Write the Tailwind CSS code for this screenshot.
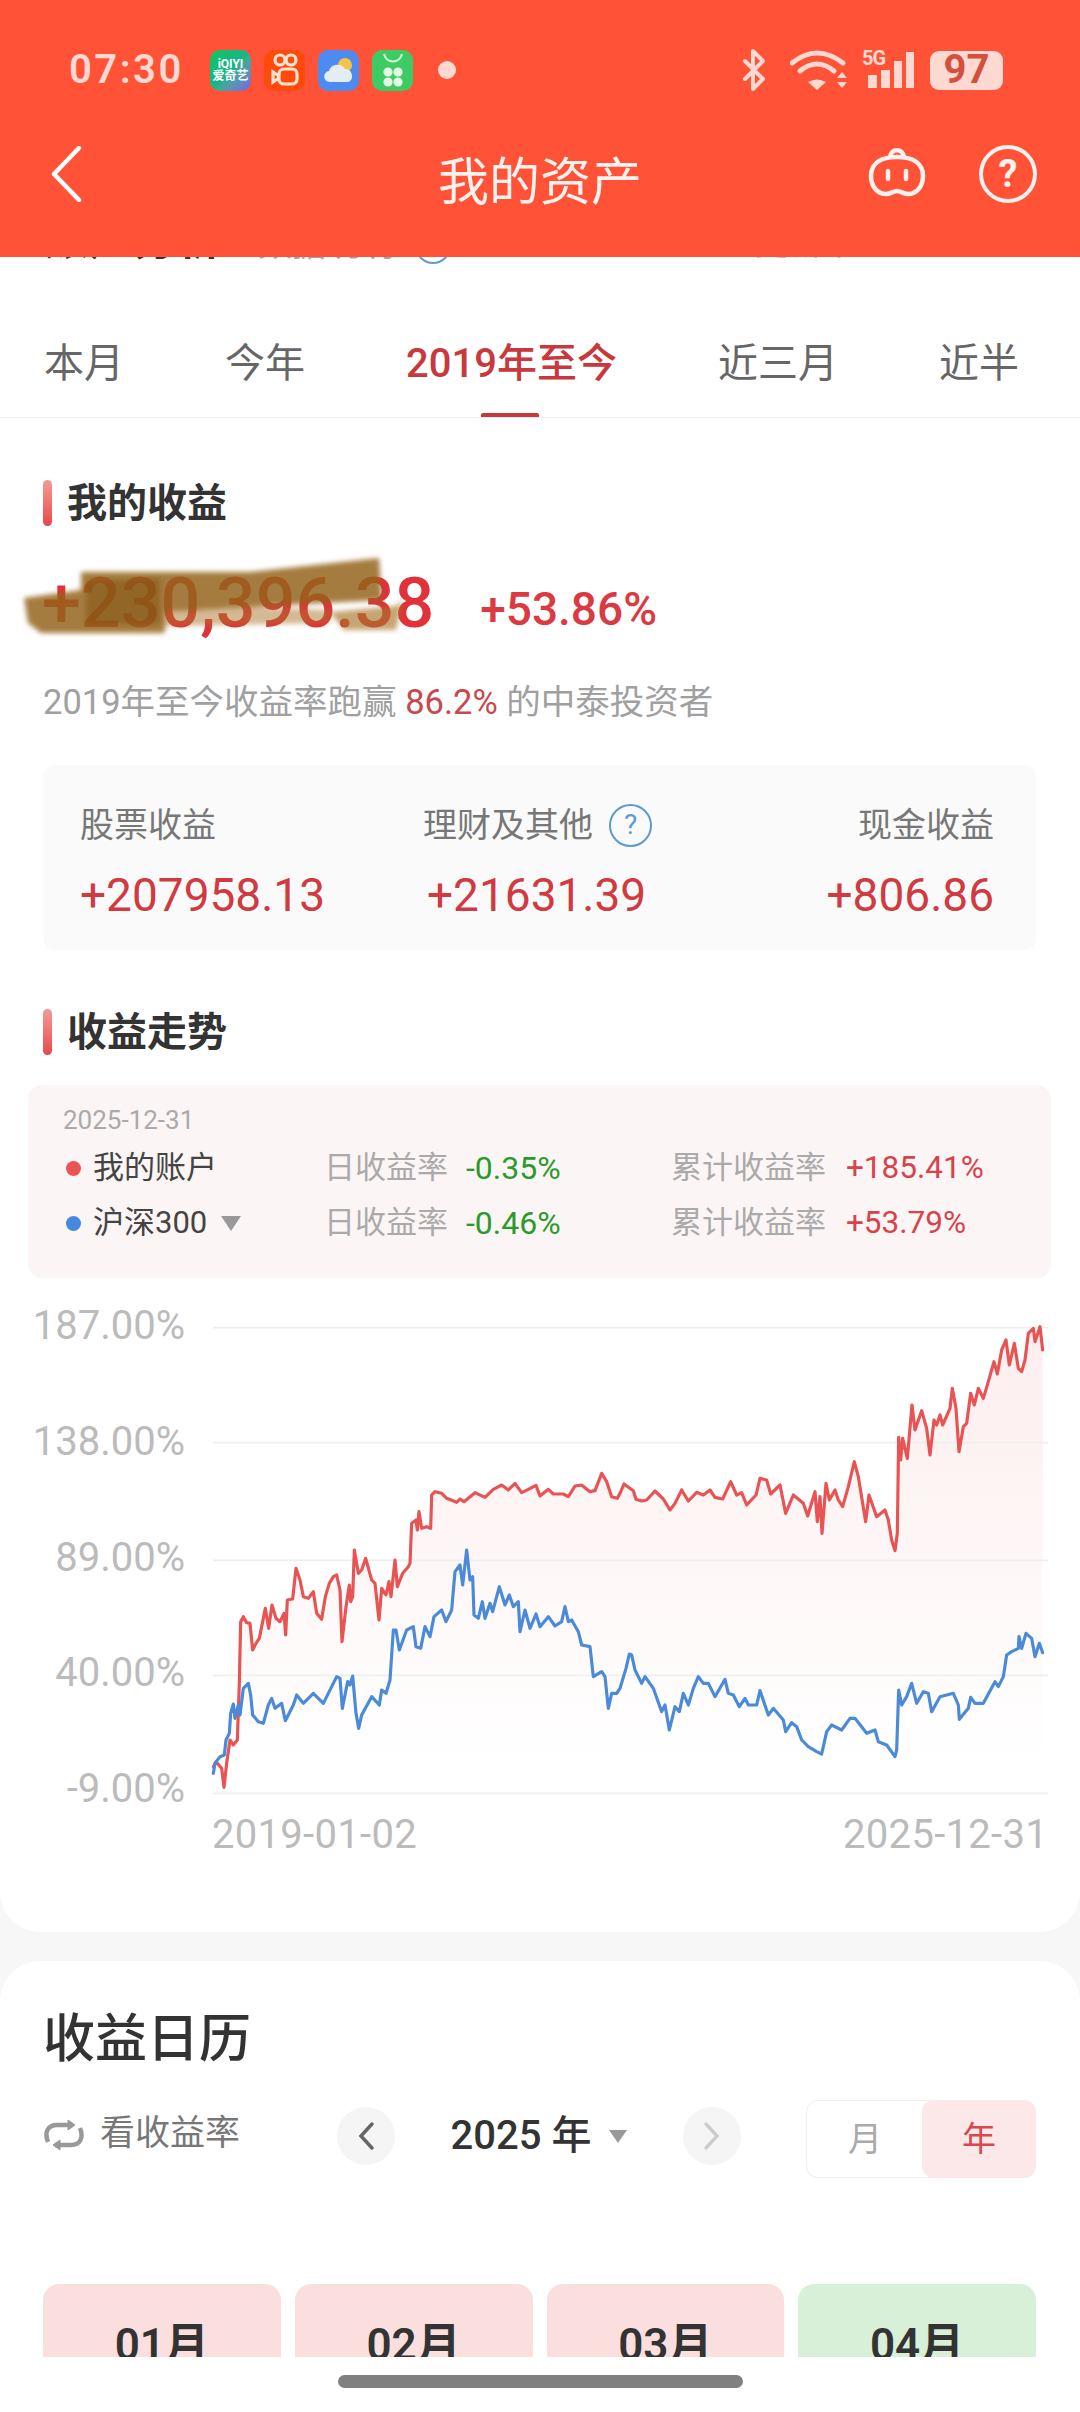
<!DOCTYPE html>
<html lang="zh">

<head>
    <meta charset="UTF-8">
    <meta name="viewport" content="width=device-width, initial-scale=1.0">
    <script src="https://cdn.jsdelivr.net/npm/@tailwindcss/browser@4"></script>
    <title>我的资产</title>
</head>

<body class="relative flex flex-col w-[1080px] h-[2412px] overflow-hidden bg-[#f7f7f7] font-[Roboto,'Noto_Sans_CJK_SC',sans-serif]">
    <!-- Header -->
    <header class="relative z-10 flex flex-col h-[257px] shrink-0 bg-[#ff5236]">
        <!-- Status bar -->
        <div class="flex items-center h-[42px] mt-[49px] pl-[69px] text-[#fdd9d2]">
            <span class="w-[141px] text-[40px] font-semibold tracking-[2.5px] leading-none">07:30</span>
            <div class="flex flex-col items-center justify-center w-[41px] h-[41px] rounded-[10px] bg-gradient-to-br from-[#12c45e] via-[#18b487] to-[#7a5be8] text-white leading-none">
                <span class="text-[12px] font-bold">iQIYI</span>
                <span class="text-[12px] font-bold">爱奇艺</span>
            </div>
            <div class="flex items-center justify-center w-[41px] h-[41px] ml-[13px] rounded-[10px] bg-[#ff4a0c]">
                <svg width="28" height="34" viewBox="0 0 28 34" fill="none" stroke="#ffe3cf" stroke-width="3.2">
                    <circle cx="9" cy="7" r="5" />
                    <circle cx="20" cy="7" r="5" />
                    <rect x="8" y="16" width="18" height="15" rx="5" />
                    <path d="M8 23 L2 19 V29 L8 25" />
                </svg>
            </div>
            <div class="flex items-center justify-center w-[41px] h-[41px] ml-[13px] rounded-[10px] bg-[#4d8bf0]">
                <svg width="34" height="30" viewBox="0 0 34 30">
                    <circle cx="23" cy="10" r="7" fill="#f6c445" />
                    <path d="M8 27 C1 27 0 17 7 16 C9 8 20 8 23 14 C31 13 33 27 25 27 Z" fill="#e4edf4" />
                </svg>
            </div>
            <div class="flex items-center justify-center w-[41px] h-[41px] ml-[13px] rounded-[10px] bg-[#3ecb63]">
                <svg width="26" height="36" viewBox="0 0 26 36" fill="none">
                    <path d="M4 2 C7 12 19 12 22 2" stroke="#d8f5dd" stroke-width="2" />
                    <circle cx="8" cy="20" r="4.6" fill="#e3f8e6" />
                    <circle cx="18" cy="20" r="4.6" fill="#e3f8e6" />
                    <circle cx="8" cy="30" r="4.6" fill="#e3f8e6" />
                    <circle cx="18" cy="30" r="4.6" fill="#e3f8e6" />
                </svg>
            </div>
            <span class="w-[18px] h-[18px] ml-[25px] rounded-full bg-[#fdd9d2]"></span>

            <svg class="ml-[286px]" width="24" height="42" viewBox="0 0 24 42" fill="none" stroke="#fdd9d2" stroke-width="4" stroke-linecap="round" stroke-linejoin="round">
                <path d="M3 12 L21 30 L11 40 V2 L21 12 L3 30" />
            </svg>
            <svg class="ml-[24px]" width="58" height="40" viewBox="0 0 58 40" fill="none" stroke="#fdd9d2" stroke-width="5" stroke-linecap="round">
                <path d="M2 13 Q27 -7 53 13" />
                <path d="M10 21 Q27 7 44 21" />
                <path d="M18 32 Q27 27 36 32 L27 40 Z" fill="#fdd9d2" stroke="none" />
                <path d="M47 28 L52 22 L57 28 Z M47 32 L57 32 L52 38 Z" fill="#fdd9d2" stroke="none" />
            </svg>
            <div class="relative w-[52px] h-[40px] ml-[14px]">
                <span class="absolute left-0 top-0 text-[20px] font-bold leading-[16px] tracking-[-1px]">5G</span>
                <div class="absolute left-[6px] bottom-[2px] flex items-end gap-[4px]">
                    <span class="w-[9px] h-[13px] bg-[#fdd9d2]"></span>
                    <span class="w-[9px] h-[18px] bg-[#fdd9d2]"></span>
                    <span class="w-[8px] h-[27px] bg-[#fdd9d2]"></span>
                    <span class="w-[8px] h-[36px] bg-[#fdd9d2]"></span>
                </div>
            </div>
            <div class="flex items-center justify-center w-[73px] h-[39px] ml-[16px] rounded-[9px] bg-[#fdd9d2] text-[#d4503c] text-[40px] font-bold leading-none">97</div>
        </div>

        <!-- Nav bar -->
        <div class="grid grid-cols-[1fr_auto_1fr] items-center h-[68px] mt-[49px]">
            <svg class="ml-[50px]" width="32" height="56" viewBox="0 0 32 56" fill="none" stroke="#fff" stroke-width="4.5" stroke-linecap="round" stroke-linejoin="round">
                <path d="M29 2 L4 28 L29 54" />
            </svg>
            <h1 class="mt-[17px] text-[51px] leading-none text-[#fff2ee]">我的资产</h1>
            <div class="flex items-center justify-end gap-[52px] pr-[43px]">
                <svg width="60" height="52" viewBox="0 0 60 52" fill="none" stroke="#fff2ee" stroke-width="4.5" stroke-linecap="round">
                    <path d="M23 9 C24 0 36 0 37 9" />
                    <path d="M4 28 C4 14 16 9 30 9 C44 9 56 14 56 28 C56 38 50 46 41 46 C36 46 34 43 30 43 C26 43 24 46 19 46 C10 46 4 38 4 28 Z" />
                    <path d="M21 23 V31 M39 23 V31" />
                </svg>
                <div class="flex items-center justify-center w-[58px] h-[58px] rounded-full border-[4px] border-[#fff2ee] text-[#fff2ee] text-[38px] font-bold leading-none">?</div>
            </div>
        </div>
    </header>

    <!-- Card: assets -->
    <main class="flex flex-col h-[1675px] shrink-0 rounded-b-[40px] bg-white">
        <!-- Row scrolled under the header -->
        <div class="flex items-start h-[56px] pl-[45px] overflow-hidden shrink-0">
            <div class="flex items-start -mt-[43px]">
                <span class="w-[213px] text-[44px] leading-[52px] font-bold text-[#333]">账户分析</span>
                <span class="w-[157px] mt-[4px] text-[34px] leading-[52px] text-[#9aa3b5]">数据说明</span>
                <span class="flex w-[36px] h-[36px] mt-[14px] rounded-full border-2 border-[#5c9bd0]"></span>
                <span class="ml-[303px] mt-[3px] text-[34px] leading-[52px] text-[#bbb]">更新中</span>
            </div>
        </div>

        <!-- Tabs -->
        <nav class="flex items-start gap-[101px] h-[105px] pl-[44px] pt-[28px] border-b border-[#eee] overflow-hidden shrink-0 text-[40px] leading-[46px] text-[#666]">
            <span>本月</span>
            <span>今年</span>
            <span class="relative h-[77px] font-medium text-[#c8383c]">2019年至今
                <i class="absolute left-[75px] bottom-0 w-[58px] h-[5px] rounded-t-[2px] bg-[#c8383c]"></i>
            </span>
            <span>近三月</span>
            <span>近半</span>
        </nav>

        <div class="flex flex-col pl-[43px] pr-[44px]">
            <!-- 我的收益 -->
            <div class="flex items-center gap-[15px] h-[46px] mt-[62px]">
                <i class="w-[9px] h-[46px] rounded-full bg-gradient-to-b from-[#f29a96] to-[#e8454a]"></i>
                <h2 class="mt-[2px] text-[40px] font-bold text-[#333]">我的收益</h2>
            </div>
            <div class="relative flex items-center h-[70px] mt-[42px] text-[#e0323a] font-medium">
                <span class="text-[70px] leading-none -ml-[1px]">+230,396.38</span>
                <span class="ml-[46px] mt-[12px] text-[46px] leading-none text-[#dc3a42]">+53.86%</span>
                <!-- hand-drawn smear over the amount -->
                <svg class="absolute -left-[43px] -top-[20px] blur-[2.5px]" width="450" height="100" viewBox="0 0 450 100">
                    <path d="M24 50 L81 42 L81 24 L250 24 L379 10 L382 52 L250 59 L165 64 L165 85 L41 85 L28 75 Z" fill="#94631a" opacity=".84" />
                    <path d="M86 34 L160 30 L160 76 L86 76 Z" fill="#7d5210" opacity=".5" />
                    <path d="M330 64 L396 58 L403 52 L396 82 L344 82 Z" fill="#a8742a" opacity=".65" />
                    <path d="M165 64 L250 59 L330 62 L330 75 L165 78 Z" fill="#a8742a" opacity=".5" />
                </svg>
            </div>
            <p class="h-[40px] mt-[44px] text-[34.5px] leading-[40px] text-[#a0a0a0]">2019年至今收益率跑赢 <span class="text-[#c8484c]">86.2%</span> 的中泰投资者</p>

            <!-- 收益明细 -->
            <div class="grid grid-cols-[347px_1fr_auto] h-[185px] mt-[43px] pt-[38px] pl-[37px] pr-[42px] rounded-[12px] bg-[#fafafa]">
                <div>
                    <div class="h-[44px] text-[34px] leading-[44px] text-[#777]">股票收益</div>
                    <div class="h-[44px] mt-[26px] text-[46px] leading-[44px] text-[#d03a40]">+207958.13</div>
                </div>
                <div>
                    <div class="flex items-center gap-[16px] h-[44px] -ml-[4px] text-[34px] text-[#777]">理财及其他
                        <span class="flex items-center justify-center w-[43px] h-[43px] rounded-full border-2 border-[#5c9bd0] text-[28px] text-[#5c9bd0]">?</span>
                    </div>
                    <div class="h-[44px] mt-[26px] text-[46px] leading-[44px] text-[#d03a40]">+21631.39</div>
                </div>
                <div class="text-right">
                    <div class="h-[44px] text-[34px] leading-[44px] text-[#777]">现金收益</div>
                    <div class="h-[44px] mt-[26px] text-[46px] leading-[44px] text-[#d03a40]">+806.86</div>
                </div>
            </div>

            <!-- 收益走势 -->
            <div class="flex items-center gap-[15px] h-[46px] mt-[59px]">
                <i class="w-[9px] h-[46px] rounded-full bg-gradient-to-b from-[#f29a96] to-[#e8454a]"></i>
                <h2 class="mt-[2px] text-[40px] font-bold text-[#333]">收益走势</h2>
            </div>
            <div class="h-[193px] mt-[30px] -ml-[15px] -mr-[15px] pt-[20px] pl-[35px] rounded-[14px] bg-[#fbf5f5]">
                <div class="h-[30px] text-[26px] leading-[30px] text-[#aaa]">2025-12-31</div>
                <div class="grid grid-cols-[258px_347px_auto] items-center h-[44px] mt-[9px] ml-[3px] text-[31px]">
                    <div class="flex items-center gap-[12px] text-[#444]"><i class="w-[15px] h-[15px] rounded-full bg-[#ea5455]"></i>我的账户</div>
                    <div class="flex items-center gap-[18px] text-[#aaa]">日收益率<span class="text-[32px] text-[#2a9a2a]">-0.35%</span></div>
                    <div class="flex items-center gap-[20px] text-[#aaa]">累计收益率<span class="text-[31.5px] text-[#d8424a]">+185.41%</span></div>
                </div>
                <div class="grid grid-cols-[258px_347px_auto] items-center h-[44px] mt-[11px] ml-[3px] text-[31px]">
                    <div class="flex items-center gap-[12px] text-[#444]"><i class="w-[15px] h-[15px] rounded-full bg-[#4488e0]"></i>沪深300
                        <i class="w-0 h-0 ml-[2px] border-x-[10px] border-x-transparent border-t-[15px] border-t-[#999]"></i>
                    </div>
                    <div class="flex items-center gap-[18px] text-[#aaa]">日收益率<span class="text-[32px] text-[#2a9a2a]">-0.46%</span></div>
                    <div class="flex items-center gap-[20px] text-[#aaa]">累计收益率<span class="text-[31.5px] text-[#d8424a]">+53.79%</span></div>
                </div>
            </div>

            <!-- Chart -->
            <div class="relative flex flex-col pt-[25px] text-[40px] leading-[46px] text-[#bbb]">
                <div class="flex flex-col justify-between w-[162px] h-[509px] -ml-[20px] text-right">
                    <span>187.00%</span>
                    <span>138.00%</span>
                    <span>89.00%</span>
                    <span>40.00%</span>
                    <span>-9.00%</span>
                </div>
                <div class="flex justify-between ml-[169px] -mr-[12px] tracking-[0.3px]">
                    <span>2019-01-02</span>
                    <span>2025-12-31</span>
                </div>
                <svg class="absolute left-[137px] top-[22px]" width="900" height="520" viewBox="0 0 2700 1560" fill="none">
                    <defs>
                        <linearGradient id="area" gradientUnits="userSpaceOnUse" x1="0" y1="80" x2="0" y2="1400">
                            <stop offset="0" stop-color="#fdeeee" />
                            <stop offset="0.55" stop-color="#fef7f7" />
                            <stop offset="1" stop-color="#ffffff" />
                        </linearGradient>
                    </defs>
                    <path id="red-area" fill="url(#area)" />
                    <path d="M99 83 H2604 M99 428 H2604 M99 781 H2604 M99 1126 H2604 M99 1480 H2604" stroke="#efefef" stroke-width="5" />
                    <path id="red-line" stroke="#e85353" stroke-width="9.5" stroke-linejoin="round" stroke-linecap="round" />
                    <path id="blue-line" stroke="#4a8ad8" stroke-width="9.5" stroke-linejoin="round" stroke-linecap="round" />
                </svg>
            </div>
        </div>
    </main>

    <!-- Card: calendar -->
    <section class="flex flex-col flex-1 mt-[29px] pt-[49px] pl-[43px] pr-[44px] rounded-t-[40px] bg-white">
        <h2 class="h-[60px] text-[52px] leading-[60px] font-medium text-[#333]">收益日历</h2>
        <div class="flex items-center h-[78px] mt-[30px]">
            <div class="flex items-center gap-[15px] w-[294px] mb-[9px] text-[35px] text-[#777]">
                <svg width="42" height="32" viewBox="0 0 42 32" fill="none" stroke="#999" stroke-width="4.5" stroke-linejoin="round">
                    <path d="M5 23 C1 13 5 6 14 6 L30 6" />
                    <path d="M25 1 L32 6 L25 11 Z" fill="#999" stroke-width="1" />
                    <path d="M37 9 C41 19 37 26 28 26 L12 26" />
                    <path d="M17 21 L10 26 L17 31 Z" fill="#999" stroke-width="1" />
                </svg>
                看收益率
            </div>
            <div class="flex items-center justify-center w-[58px] h-[58px] mb-[6px] rounded-full bg-[#f5f5f5]">
                <svg width="18" height="30" viewBox="0 0 18 30" fill="none" stroke="#666" stroke-width="3.5" stroke-linecap="round">
                    <path d="M15 3 L4 15 L15 27" />
                </svg>
            </div>
            <div class="flex items-center justify-center gap-[18px] w-[288px] mb-[6px] text-[40px] font-medium text-[#333]">2025 年
                <i class="w-0 h-0 border-x-[9px] border-x-transparent border-t-[13px] border-t-[#999]"></i>
            </div>
            <div class="flex items-center justify-center w-[58px] h-[58px] mb-[6px] rounded-full bg-[#f5f5f5]">
                <svg width="18" height="30" viewBox="0 0 18 30" fill="none" stroke="#ccc" stroke-width="3.5" stroke-linecap="round">
                    <path d="M3 3 L14 15 L3 27" />
                </svg>
            </div>
            <div class="flex w-[230px] h-[78px] ml-auto rounded-[12px] border border-[#eee] text-[34px]">
                <span class="flex items-center justify-center flex-1 text-[#aaa]">月</span>
                <span class="flex items-center justify-center w-[114px] -m-[1px] rounded-[12px] bg-[#fce8e8] text-[#d8484c]">年</span>
            </div>
        </div>
        <div class="grid grid-cols-4 gap-[14px] mt-[106px]">
            <div class="h-[100px] pt-[36px] rounded-[16px] bg-[#fbdfdf] text-center text-[44px] leading-[50px] font-semibold text-[#333]">01月</div>
            <div class="h-[100px] pt-[36px] rounded-[16px] bg-[#fbdfdf] text-center text-[44px] leading-[50px] font-semibold text-[#333]">02月</div>
            <div class="h-[100px] pt-[36px] rounded-[16px] bg-[#fbdfdf] text-center text-[44px] leading-[50px] font-semibold text-[#333]">03月</div>
            <div class="h-[100px] pt-[36px] rounded-[16px] bg-[#d8efd8] text-center text-[44px] leading-[50px] font-semibold text-[#333]">04月</div>
        </div>
    </section>

    <!-- Gesture bar, lies over the page -->
    <div class="absolute left-0 bottom-0 flex justify-center w-full h-[55px] pt-[18px] bg-white">
        <span class="w-[405px] h-[13px] rounded-full bg-[#808080]"></span>
    </div>

    <script>
        // traced points, 3 units per pixel, second half starts at x = 1320
        const redA = [100,1400,108,1385,125,1405,132,1462,140,1390,150,1320,160,1335,172,1320,178,1150,182,965,190,950,200,968,210,970,218,1050,228,1030,238,1015,256,925,266,985,276,915,288,955,300,965,312,940,317,1005,322,900,338,897,348,805,360,840,370,890,385,895,400,875,410,940,425,958,436,890,448,850,460,830,470,825,480,870,486,1025,498,920,508,855,512,905,518,890,523,750,535,820,545,810,557,775,575,840,585,850,597,960,605,865,618,885,627,845,633,890,645,780,652,860,668,820,685,800,690,790,695,670,708,660,712,690,717,635,725,685,740,680,752,685,755,585,765,575,785,580,800,595,830,607,840,597,852,605,885,578,915,592,940,568,965,555,985,570,1005,550,1025,578,1045,568,1068,556,1080,588,1105,568,1120,582,1150,582,1165,590,1185,558,1205,555,1230,575,1245,572,1265,520,1280,545,1295,590,1312,595];
        const redB = [0,580,12,552,40,572,48,598,65,603,80,600,105,573,130,597,150,630,165,610,185,570,205,603,230,577,250,585,270,570,285,592,308,597,332,545,350,585,365,578,380,615,408,585,420,535,440,540,452,582,480,555,497,640,520,585,550,610,563,648,585,575,592,665,600,590,606,700,618,550,628,600,645,570,655,600,668,620,685,560,703,485,715,530,737,665,747,585,770,650,795,630,805,660,815,720,825,752,832,700,836,412,842,480,848,415,862,475,876,315,885,390,905,332,920,385,930,465,942,360,950,375,960,345,968,375,990,325,997,265,1008,325,1017,455,1030,380,1040,370,1052,280,1063,315,1075,265,1090,295,1105,245,1122,185,1132,222,1145,150,1158,120,1168,195,1183,130,1195,205,1205,215,1215,180,1225,100,1240,85,1245,125,1260,80,1268,150];
        const blueA = [100,1420,105,1390,120,1370,133,1365,138,1320,148,1300,152,1240,160,1212,165,1255,175,1215,180,1245,190,1165,205,1150,212,1185,218,1245,235,1265,250,1270,265,1215,275,1195,285,1225,305,1210,316,1262,340,1215,350,1185,370,1210,400,1180,430,1210,445,1180,470,1130,480,1135,487,1225,503,1145,510,1155,518,1128,528,1240,536,1285,545,1245,575,1190,598,1215,605,1170,618,1180,630,1140,640,990,648,990,658,1050,680,990,700,980,708,1040,722,1045,735,980,750,1010,762,950,785,930,798,965,815,930,825,815,840,795,848,855,860,750,870,840,878,830,882,945,895,955,907,905,915,955,930,910,938,935,958,860,975,915,988,885,1000,920,1015,905,1020,995,1035,930,1050,985,1068,942,1080,980,1105,950,1125,978,1145,965,1155,920,1165,965,1175,960,1195,995,1205,1035,1230,1040,1240,1130,1265,1115,1275,1130,1285,1225,1295,1180,1310,1180];
        const blueB = [0,1165,18,1105,28,1062,35,1065,45,1110,65,1150,75,1130,100,1165,125,1235,135,1215,148,1290,165,1220,178,1235,190,1180,205,1215,220,1165,235,1130,250,1150,265,1150,285,1190,315,1138,325,1180,340,1185,358,1220,375,1195,385,1215,410,1215,420,1172,445,1245,460,1225,490,1260,497,1295,515,1268,530,1280,545,1320,565,1340,590,1355,605,1362,620,1295,635,1275,665,1290,690,1255,705,1255,740,1300,765,1290,775,1325,800,1335,825,1370,830,1350,836,1170,845,1215,860,1190,875,1150,890,1210,910,1175,925,1180,935,1235,960,1190,1000,1180,1015,1215,1018,1258,1045,1225,1052,1192,1065,1210,1090,1210,1125,1145,1135,1160,1150,1130,1160,1065,1175,1055,1195,1045,1197,1010,1205,1045,1218,1000,1235,1015,1245,1070,1258,1030,1268,1058];

        function toPath(a, b) {
            const pts = [];
            for (let i = 0; i < a.length; i += 2) pts.push(a[i] + " " + a[i + 1]);
            for (let i = 0; i < b.length; i += 2) pts.push((b[i] + 1320) + " " + b[i + 1]);
            return "M" + pts.join(" L");
        }

        const red = toPath(redA, redB);
        document.getElementById("red-line").setAttribute("d", red);
        document.getElementById("red-area").setAttribute("d", red + " L2588 1480 L100 1480 Z");
        document.getElementById("blue-line").setAttribute("d", toPath(blueA, blueB));
    </script>
</body>

</html>
